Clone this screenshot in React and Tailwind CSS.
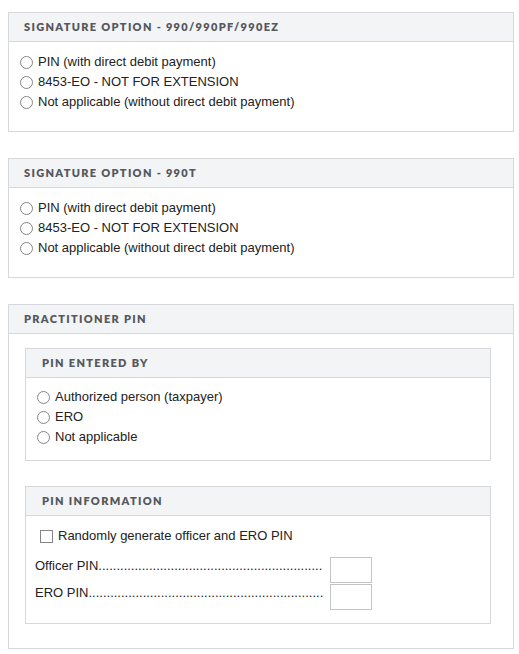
import React from 'react';

const body = { fontFamily: '"Liberation Sans", Arial, sans-serif' };

function PanelHeader({ title, inner }) {
  return (
    <div
      className={`h-[28px] box-content bg-[#f3f4f6] border-b border-[#d6d8db] flex items-center ${inner ? 'pl-[16px]' : 'pl-[15px]'} font-['Lato',sans-serif] font-extrabold text-[11px] tracking-[0.12em] text-[#55585c] uppercase`}
    >
      {title}
    </div>
  );
}

function RadioRow({ name, label }) {
  return (
    <label className="flex items-center h-[20px] gap-[5px] text-[13px] text-[#222]">
      <input
        type="radio"
        name={name}
        className="appearance-none m-0 w-[13px] h-[13px] rounded-full border border-[#858585] bg-white checked:border-[4px] checked:border-[#0075ff]"
      />
      <span>{label}</span>
    </label>
  );
}

function SignaturePanel({ title, name, className = '' }) {
  return (
    <div className={`border border-[#d6d8db] bg-white ${className}`}>
      <PanelHeader title={title} />
      <div className="pl-[11px] pt-[10px] pb-[19px]">
        <RadioRow name={name} label="PIN (with direct debit payment)" />
        <RadioRow name={name} label="8453-EO - NOT FOR EXTENSION" />
        <RadioRow name={name} label="Not applicable (without direct debit payment)" />
      </div>
    </div>
  );
}

function PinRow({ label, dots }) {
  return (
    <div className="flex items-start h-[27px]">
      <div className="w-[287px] whitespace-nowrap leading-[20px] text-[13px] text-[#222]">
        {label}
        {'.'.repeat(dots)}
      </div>
      <input
        type="text"
        className="ml-[8px] mt-[1px] w-[42px] h-[26px] border border-[#c4c4c4] bg-white outline-none"
      />
    </div>
  );
}

export default function App() {
  return (
    <div className="bg-white min-h-screen pl-2 pt-3" style={body}>
      <div className="w-[506px]">
        <SignaturePanel title="Signature Option - 990/990PF/990EZ" name="sig990" />
        <SignaturePanel title="Signature Option - 990T" name="sig990t" className="mt-[26px]" />

        {/* Practitioner PIN */}
        <div className="mt-[26px] border border-[#d6d8db] bg-white">
          <PanelHeader title="Practitioner PIN" />
          <div className="pl-[16px] pt-[14px] pb-[24px]">
            <div className="w-[466px] border border-[#d6d8db]">
              <PanelHeader title="PIN Entered By" inner />
              <div className="pl-[11px] pt-[9px] pb-[13px]">
                <RadioRow name="enteredBy" label="Authorized person (taxpayer)" />
                <RadioRow name="enteredBy" label="ERO" />
                <RadioRow name="enteredBy" label="Not applicable" />
              </div>
            </div>

            <div className="mt-[25px] w-[466px] border border-[#d6d8db]">
              <PanelHeader title="PIN Information" inner />
              <div className="pt-[10px] pb-[13px]">
                <label className="flex items-center h-[20px] pl-[14px] gap-[5px] text-[13px] text-[#222]">
                  <input
                    type="checkbox"
                    className="appearance-none m-0 w-[13px] h-[13px] border border-[#858585] bg-white checked:bg-[#0075ff]"
                  />
                  <span>Randomly generate officer and ERO PIN</span>
                </label>
                <div className="mt-[10px] pl-[9px]">
                  <PinRow label="Officer PIN" dots={62} />
                  <PinRow label="ERO PIN" dots={65} />
                </div>
              </div>
            </div>
          </div>
        </div>
      </div>
    </div>
  );
}
